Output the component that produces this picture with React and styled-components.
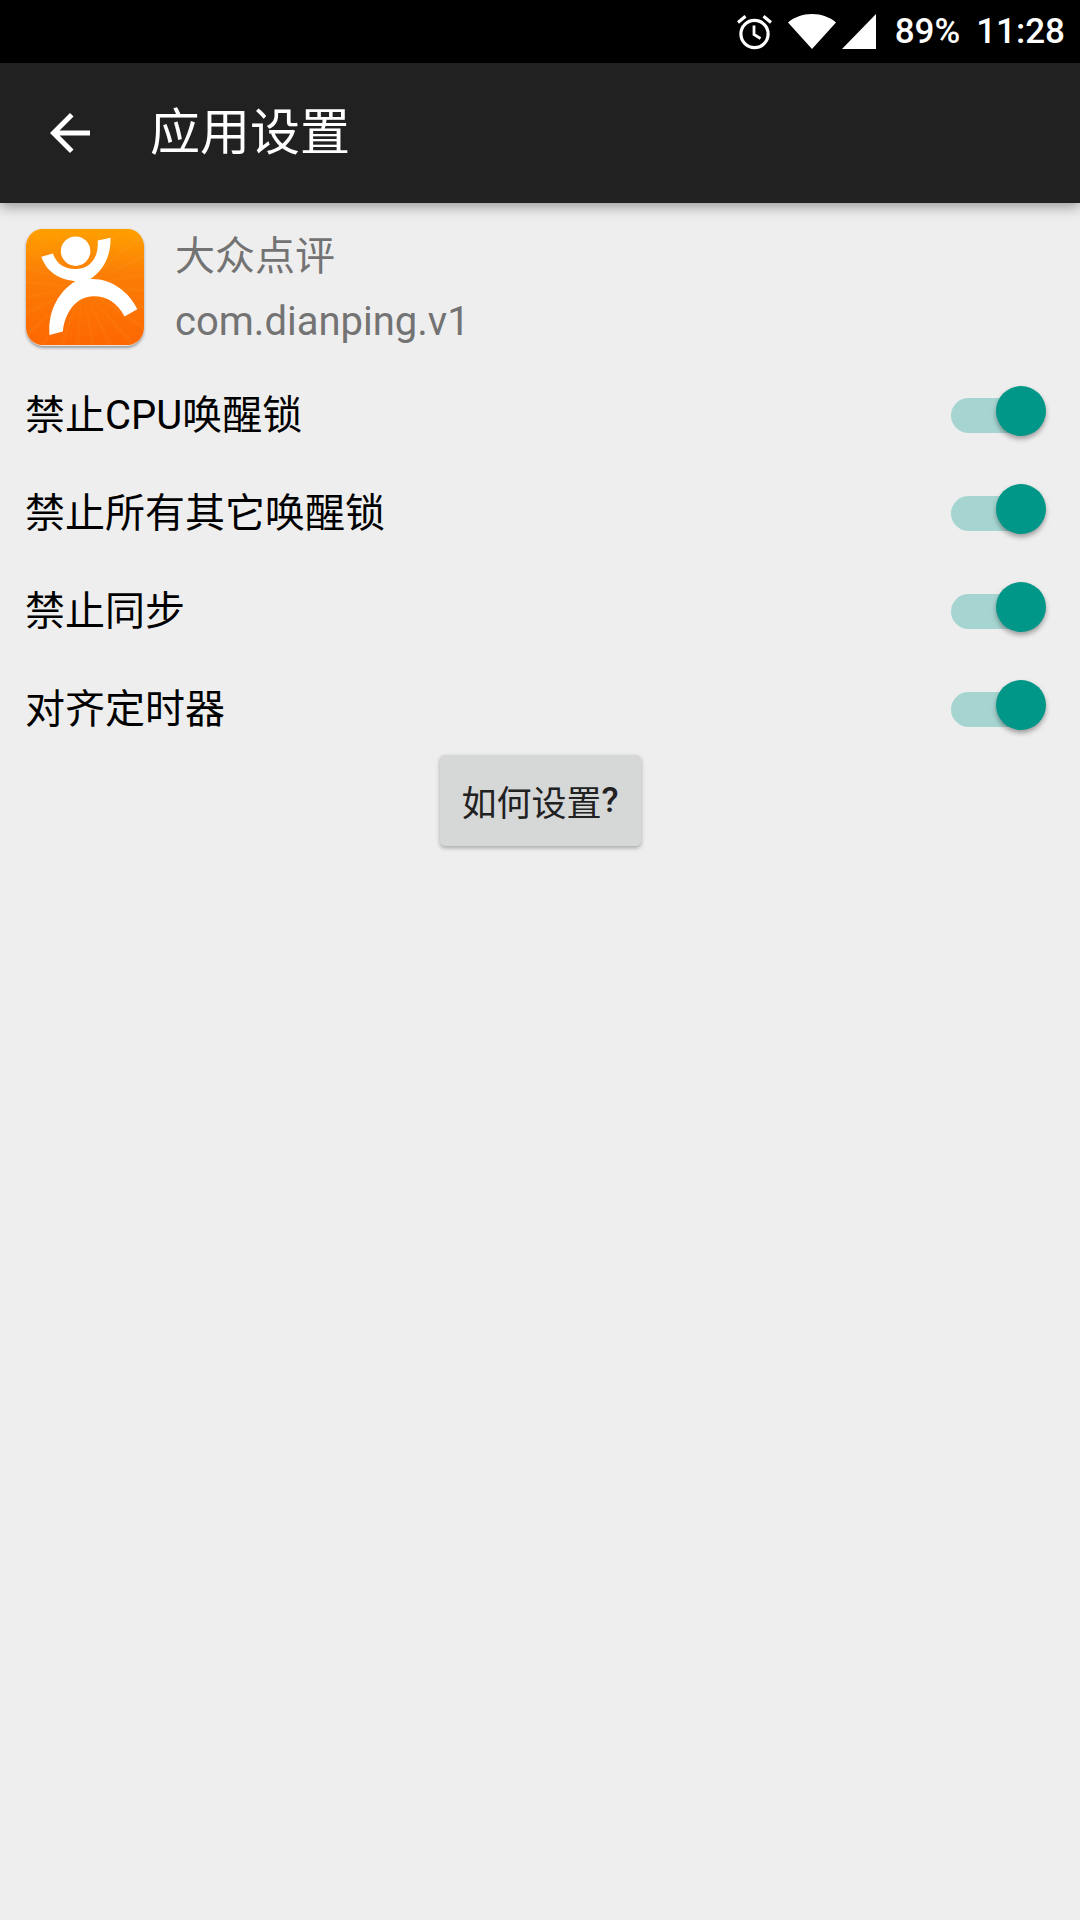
import React from 'react'
import styled, { createGlobalStyle } from 'styled-components'

const GlobalStyle = createGlobalStyle`
  html, body {
    margin: 0;
    padding: 0;
    background: #eeeeee;
  }
  body {
    font-family: Roboto, 'Noto Sans CJK SC', sans-serif;
  }
`

const settings = ['禁止CPU唤醒锁', '禁止所有其它唤醒锁', '禁止同步', '对齐定时器']

const rayAngles = Array.from({ length: 24 }, (_, i) => i * 15 + 4)

const AlarmIcon = () => (
  <svg width="35" height="36" viewBox="0 0 35 36" fill="none" stroke="#fff">
    <circle cx="17.5" cy="20" r="13.6" strokeWidth="3.2" />
    <path d="M17 11.5V20.5L23.5 24.5" strokeWidth="2.8" />
    <path d="M1 8.5L8.5 2.2M34 8.5L26.5 2.2" strokeWidth="3.2" />
  </svg>
)

const WifiIcon = () => (
  <svg width="48" height="35" viewBox="0 0 48 35">
    <path d="M0 8.5C6.5 3 14.5 0 24 0s17.5 3 24 8.5L24 35z" fill="#fff" />
  </svg>
)

const SignalIcon = () => (
  <svg width="34" height="35" viewBox="0 0 34 35">
    <path d="M0 35L34 0V35z" fill="#fff" />
  </svg>
)

const BackIcon = () => (
  <svg width="60" height="60" viewBox="0 0 24 24">
    <path d="M20 11H7.83l5.59-5.59L12 4l-8 8 8 8 1.41-1.41L7.83 13H20v-2z" fill="#fff" />
  </svg>
)

const AppLogo = () => (
  <svg width="118" height="118" viewBox="33 28 352 348">
    <defs>
      <linearGradient id="logoBg" x1="0" y1="0" x2="0" y2="1">
        <stop offset="0" stopColor="#ffa000" />
        <stop offset="0.4" stopColor="#fb7d06" />
        <stop offset="1" stopColor="#fd6700" />
      </linearGradient>
      <clipPath id="logoClip">
        <rect x="33" y="28" width="352" height="348" rx="52" />
      </clipPath>
    </defs>
    <g clipPath="url(#logoClip)">
      <rect x="33" y="28" width="352" height="348" fill="url(#logoBg)" />
      {rayAngles.map((a) => (
        <path
          key={a}
          d="M200 200L620 186V214Z"
          fill="#ffb040"
          opacity="0.08"
          transform={`rotate(${a} 200 200)`}
        />
      ))}
    </g>
    <circle cx="181" cy="95" r="44" fill="#fff" />
    <path
      d="M79 112L113 102C125 135 150 150 185 148C225 146 250 115 247 63L285 55C287 110 262 155 225 178C285 175 340 215 365 268L327 290C305 245 265 225 225 230C180 235 148 280 143 335L103 345C98 280 125 220 180 185C135 180 95 160 79 112Z"
      fill="#fff"
    />
  </svg>
)

const App = () => {
  return (
    <Page>
      <GlobalStyle />
      <StatusBar>
        <StatusIcons>
          <AlarmIcon />
          <WifiIcon />
          <SignalIcon />
        </StatusIcons>
        <Battery>89%</Battery>
        <Clock>11:28</Clock>
      </StatusBar>
      <AppBar>
        <BackButton>
          <BackIcon />
        </BackButton>
        <Title>应用设置</Title>
      </AppBar>
      <Content>
        <AppHeader>
          <LogoWrap>
            <AppLogo />
          </LogoWrap>
          <AppInfo>
            <AppName>大众点评</AppName>
            <AppName>com.dianping.v1</AppName>
          </AppInfo>
        </AppHeader>
        {settings.map((label) => (
          <SettingRow key={label}>
            <SettingLabel>{label}</SettingLabel>
            <Switch>
              <SwitchThumb />
            </Switch>
          </SettingRow>
        ))}
        <ButtonRow>
          <HelpButton>
            如何设置<QuestionMark>?</QuestionMark>
          </HelpButton>
        </ButtonRow>
      </Content>
    </Page>
  )
}

const Page = styled.div`
  width: 1080px;
  height: 1920px;
  display: flex;
  flex-direction: column;
  overflow: hidden;
  background: #eeeeee;
`

const StatusBar = styled.div`
  height: 63px;
  flex-shrink: 0;
  display: flex;
  align-items: center;
  justify-content: flex-end;
  padding-right: 15px;
  background: #000;
  color: #fff;
  font-size: 35px;
  font-weight: 500;
`

const StatusIcons = styled.div`
  display: flex;
  align-items: center;
  gap: 16px;
  margin-right: 19px;
  svg:nth-child(2) {
    margin-right: -10px;
  }
`

const Battery = styled.span`
  margin-right: 16px;
`

const Clock = styled.span``

const AppBar = styled.div`
  height: 140px;
  flex-shrink: 0;
  position: relative;
  z-index: 1;
  display: flex;
  align-items: center;
  padding-left: 40px;
  background: #212121;
  box-shadow: 0 4px 12px rgba(0, 0, 0, 0.35);
`

const BackButton = styled.div`
  width: 60px;
  height: 60px;
  margin-right: 50px;
`

const Title = styled.div`
  font-size: 50px;
  color: #fff;
  line-height: 60px;
`

const Content = styled.div`
  flex: 1;
  display: flex;
  flex-direction: column;
`

const AppHeader = styled.div`
  display: flex;
  align-items: center;
  padding: 21px 0 9px 26px;
`

const LogoWrap = styled.div`
  width: 118px;
  height: 118px;
  margin: -4px 31px 0 0;
  border-radius: 18px;
  box-shadow: 0 2px 3px rgba(0, 0, 0, 0.35);
  svg {
    display: block;
  }
`

const AppInfo = styled.div`
  display: flex;
  flex-direction: column;
`

const AppName = styled.div`
  font-size: 40px;
  line-height: 65px;
  color: #737373;
`

const SettingRow = styled.div`
  height: 98px;
  display: flex;
  align-items: center;
  justify-content: space-between;
  padding: 0 44px 0 25px;
`

const SettingLabel = styled.div`
  font-size: 40px;
  color: #000;
`

const Switch = styled.div`
  position: relative;
  width: 85px;
  height: 35px;
  margin-top: 7px;
  border-radius: 18px;
  background: #a6d5d1;
`

const SwitchThumb = styled.div`
  position: absolute;
  right: -10px;
  top: -12px;
  width: 50px;
  height: 50px;
  border-radius: 50%;
  background: #009688;
  box-shadow: 0 3px 5px rgba(0, 0, 0, 0.35);
`

const ButtonRow = styled.div`
  display: flex;
  justify-content: center;
`

const HelpButton = styled.div`
  width: 201px;
  height: 91px;
  display: flex;
  align-items: center;
  justify-content: center;
  border-radius: 5px;
  background: #d6d7d7;
  color: #212121;
  font-size: 35px;
  box-shadow: 0 2px 4px rgba(0, 0, 0, 0.3);
`

const QuestionMark = styled.span`
  font-weight: 500;
`

export default App
